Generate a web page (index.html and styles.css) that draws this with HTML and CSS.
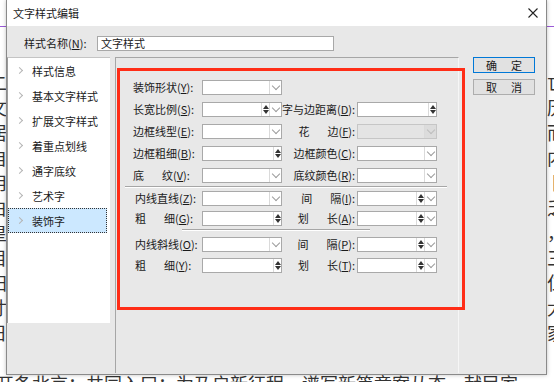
FILE: index.html
```html
<!DOCTYPE html>
<html lang="zh-CN">
<head>
    <meta charset="UTF-8">
    <title>文字样式编辑</title>
    <link rel="stylesheet" href="styles.css">
</head>
<body>

<div class="doc">
    <div class="doc-rule"></div>
    <div class="strip strip-left">
        <div class="col">二<br>文<br>居<br>自<br>用<br>白<br>皇<br>目<br>扫<br>寸<br>日</div>
    </div>
    <div class="strip strip-right">
        <div class="col">亡<br>历<br>而<br>内<br>卜<br>乏<br>，<br>三<br>仁<br>大<br>家</div>
    </div>
    <div class="strip strip-bottom">
        <div class="line">开条北京：共同入口：为乃启新征程、谱写新篇章案从态，献民家</div>
    </div>
</div>

<div class="dialog">
    <div class="titlebar">
        <span class="title">文字样式编辑</span>
        <svg class="close" viewBox="0 0 10 10"><path d="M0.5 0.5L9.5 9.5M9.5 0.5L0.5 9.5" stroke="#222" stroke-width="1.1"/></svg>
    </div>

    <div class="name-row">
        <span class="name-label">样式名称(<u>N</u>):</span>
        <div class="name-input">文字样式</div>
    </div>

    <div class="main">
        <ul class="nav">
            <li><i class="chev"></i>样式信息</li>
            <li><i class="chev"></i>基本文字样式</li>
            <li><i class="chev"></i>扩展文字样式</li>
            <li><i class="chev"></i>着重点划线</li>
            <li><i class="chev"></i>通字底纹</li>
            <li><i class="chev"></i>艺术字</li>
            <li class="active"><i class="chev"></i>装饰字</li>
        </ul>

        <div class="panel">
            <div class="group g1">
                <div class="row">
                    <span class="lbl">装饰形状(<u>Y</u>):</span>
                    <span class="field"><i class="drop"></i></span>
                    <span></span><span></span>
                </div>
                <div class="row">
                    <span class="lbl">长宽比例(<u>S</u>):</span>
                    <span class="field"><i class="spin"></i><i class="drop"></i></span>
                    <span class="lbl2">字与边距离(<u>D</u>):</span>
                    <span class="field"><i class="spin"></i></span>
                </div>
                <div class="row">
                    <span class="lbl">边框线型(<u>E</u>):</span>
                    <span class="field"><i class="drop"></i></span>
                    <span class="lbl2"><span class="sp">花</span>边(<u>F</u>):</span>
                    <span class="field off"><i class="drop"></i></span>
                </div>
                <div class="row">
                    <span class="lbl">边框粗细(<u>B</u>):</span>
                    <span class="field"><i class="spin"></i></span>
                    <span class="lbl2">边框颜色(<u>C</u>):</span>
                    <span class="field"><i class="drop"></i></span>
                </div>
                <div class="row">
                    <span class="lbl"><span class="sp">底</span>纹(<u>V</u>):</span>
                    <span class="field"><i class="drop"></i></span>
                    <span class="lbl2">底纹颜色(<u>R</u>):</span>
                    <span class="field"><i class="drop"></i></span>
                </div>
            </div>

            <div class="sep s1"></div>

            <div class="group g2">
                <div class="row">
                    <span class="lbl in">内线直线(<u>Z</u>):</span>
                    <span class="field"><i class="drop"></i></span>
                    <span class="lbl2"><span class="sp">间</span>隔(<u>I</u>):</span>
                    <span class="field"><i class="spin"></i><i class="drop"></i></span>
                </div>
                <div class="row">
                    <span class="lbl in"><span class="sp">粗</span>细(<u>G</u>):</span>
                    <span class="field"><i class="spin"></i></span>
                    <span class="lbl2"><span class="sp">划</span>长(<u>A</u>):</span>
                    <span class="field"><i class="spin"></i><i class="drop"></i></span>
                </div>
            </div>

            <div class="sep s2"></div>

            <div class="group g3">
                <div class="row">
                    <span class="lbl in">内线斜线(<u>O</u>):</span>
                    <span class="field"><i class="drop"></i></span>
                    <span class="lbl2"><span class="sp">间</span>隔(<u>P</u>):</span>
                    <span class="field"><i class="spin"></i><i class="drop"></i></span>
                </div>
                <div class="row">
                    <span class="lbl in"><span class="sp">粗</span>细(<u>Y</u>):</span>
                    <span class="field"><i class="spin"></i></span>
                    <span class="lbl2"><span class="sp">划</span>长(<u>T</u>):</span>
                    <span class="field"><i class="spin"></i><i class="drop"></i></span>
                </div>
            </div>
        </div>

        <div class="buttons">
            <div class="btn default"><span class="bsp">确</span>定</div>
            <div class="btn"><span class="bsp">取</span>消</div>
        </div>
    </div>

    <div class="mark"></div>
</div>

</body>
</html>
```

FILE: styles.css
```css
* {
    box-sizing: border-box;
}
body {
    margin: 0;
    width: 554px;
    height: 382px;
    overflow: hidden;
    position: relative;
    background: #fff;
    font-family: "Noto Sans CJK SC", sans-serif;
    font-size: 11px;
    color: #1a1a1a;
}

/* document behind the dialog: only the edges show */
.doc {
    position: absolute;
    top: 0;
    left: 0;
    right: 0;
    bottom: 0;
    font-size: 18px;
    line-height: 25px;
    color: #333;
}
.doc-rule {
    position: absolute;
    top: 26px;
    left: 0;
    right: 0;
    height: 1px;
    background: #9b5ad8;
}
.strip {
    position: absolute;
    overflow: hidden;
}
.strip-left {
    left: 0;
    top: 70px;
    width: 6px;
    height: 305px;
}
.strip-left .col {
    margin-left: -11px;
}
.strip-right {
    left: 546px;
    top: 70px;
    width: 8px;
    height: 305px;
}
.strip-right .col {
    margin-left: 1px;
}
.strip-bottom {
    left: 0;
    top: 374px;
    width: 554px;
    height: 8px;
}
.strip-bottom .line {
    margin: -3px 0 0 -4px;
    white-space: nowrap;
}

/* dialog window */
.dialog {
    position: absolute;
    left: 6px;
    top: 0;
    width: 541px;
    height: 375px;
    background: #e8e8e8;
    border: 1px solid #8a8a8a;
    border-top: none;
    box-shadow: 0 0 4px rgba(0, 0, 0, 0.25);
}
.titlebar {
    height: 26px;
    background: #fff;
    display: flex;
    align-items: center;
    justify-content: space-between;
    padding: 0 8px 0 6px;
}
.close {
    width: 10px;
    height: 10px;
}

.name-row {
    display: flex;
    align-items: center;
    height: 15px;
    margin-top: 10px;
    padding-left: 17px;
}
.name-label {
    width: 73px;
    line-height: 15px;
}
.name-input {
    width: 237px;
    height: 15px;
    background: #fff;
    border: 1px solid #a8a8a8;
    padding-left: 3px;
    line-height: 13px;
}

.main {
    display: flex;
    align-items: flex-start;
    margin-top: 6px;
}

/* left tab list */
.nav {
    width: 103px;
    height: 266px;
    margin: 0;
    padding: 0;
    list-style: none;
    background: #fff;
    border-left: 1px solid #9a9a9a;
    border-top: 1px solid #c4c4c4;
}
.nav li {
    height: 25px;
    display: flex;
    align-items: center;
    padding-left: 9px;
    margin-right: 3px;
    white-space: nowrap;
}
.nav li.active {
    background: #cce8ff;
    border: 1px dotted #333;
    padding-left: 8px;
}
.chev {
    width: 5px;
    height: 5px;
    border-right: 1px solid #b5b5b5;
    border-top: 1px solid #b5b5b5;
    transform: rotate(45deg);
    margin-right: 10px;
}

/* settings panel */
.panel {
    width: 344px;
    height: 316px;
    margin-left: 5px;
    padding-top: 22px;
    border-top: 1px solid #a6a6a6;
    border-left: 1px solid #a6a6a6;
    border-right: 1px solid #f6f6f6;
}
.group {
    display: flex;
    flex-direction: column;
}
.g1 {
    gap: 7px;
}
.g2 {
    gap: 5px;
}
.g3 {
    gap: 6px;
}
.row {
    display: grid;
    grid-template-columns: 86px 80px 75px 80px;
    height: 15px;
}
.lbl,
.lbl2 {
    line-height: 15px;
    white-space: nowrap;
}
.lbl {
    padding-left: 17px;
}
.lbl.in {
    padding-left: 19px;
}
.lbl2 {
    text-align: right;
    padding-right: 2px;
}
.sp {
    margin-right: 18px;
}
.field {
    display: flex;
    justify-content: flex-end;
    height: 15px;
    background: #fff;
    border: 1px solid #a9a9a9;
}
.field.off {
    background: #e4e4e4;
    border-color: #c6c6c6;
}
.drop {
    position: relative;
    width: 12px;
    height: 13px;
    border-left: 1px solid #dadada;
}
.drop::after {
    content: "";
    position: absolute;
    left: 3px;
    top: 2px;
    width: 5px;
    height: 5px;
    border-right: 1px solid #9c9c9c;
    border-bottom: 1px solid #9c9c9c;
    transform: rotate(45deg);
}
.off .drop {
    background: #dcdcdc;
}
.off .drop::after {
    border-color: #bdbdbd;
}
.spin {
    position: relative;
    width: 8px;
    height: 13px;
    border-left: 1px solid #dadada;
}
.spin::before,
.spin::after {
    content: "";
    position: absolute;
    left: 1px;
    border-left: 3px solid transparent;
    border-right: 3px solid transparent;
}
.spin::before {
    top: 2px;
    border-bottom: 4px solid #333;
}
.spin::after {
    bottom: 2px;
    border-top: 4px solid #333;
}

.sep {
    height: 2px;
    border-top: 1px solid #a6a6a6;
    border-bottom: 1px solid #fff;
}
.s1 {
    width: 322px;
    margin: 3px 0 3px 9px;
}
.s2 {
    width: 188px;
    margin: 3px 0 6px 66px;
}

/* buttons */
.buttons {
    display: flex;
    flex-direction: column;
    gap: 6px;
    margin-left: 14px;
}
.btn {
    width: 62px;
    height: 16px;
    display: flex;
    align-items: center;
    justify-content: center;
    background: #e1e1e1;
    border: 1px solid #adadad;
    line-height: 1;
}
.btn.default {
    border-color: #0078d7;
}
.bsp {
    margin-right: 14px;
}

/* red annotation frame */
.mark {
    position: absolute;
    left: 110px;
    top: 68px;
    width: 348px;
    height: 242px;
    border: 3px solid #ff2d17;
}
```
